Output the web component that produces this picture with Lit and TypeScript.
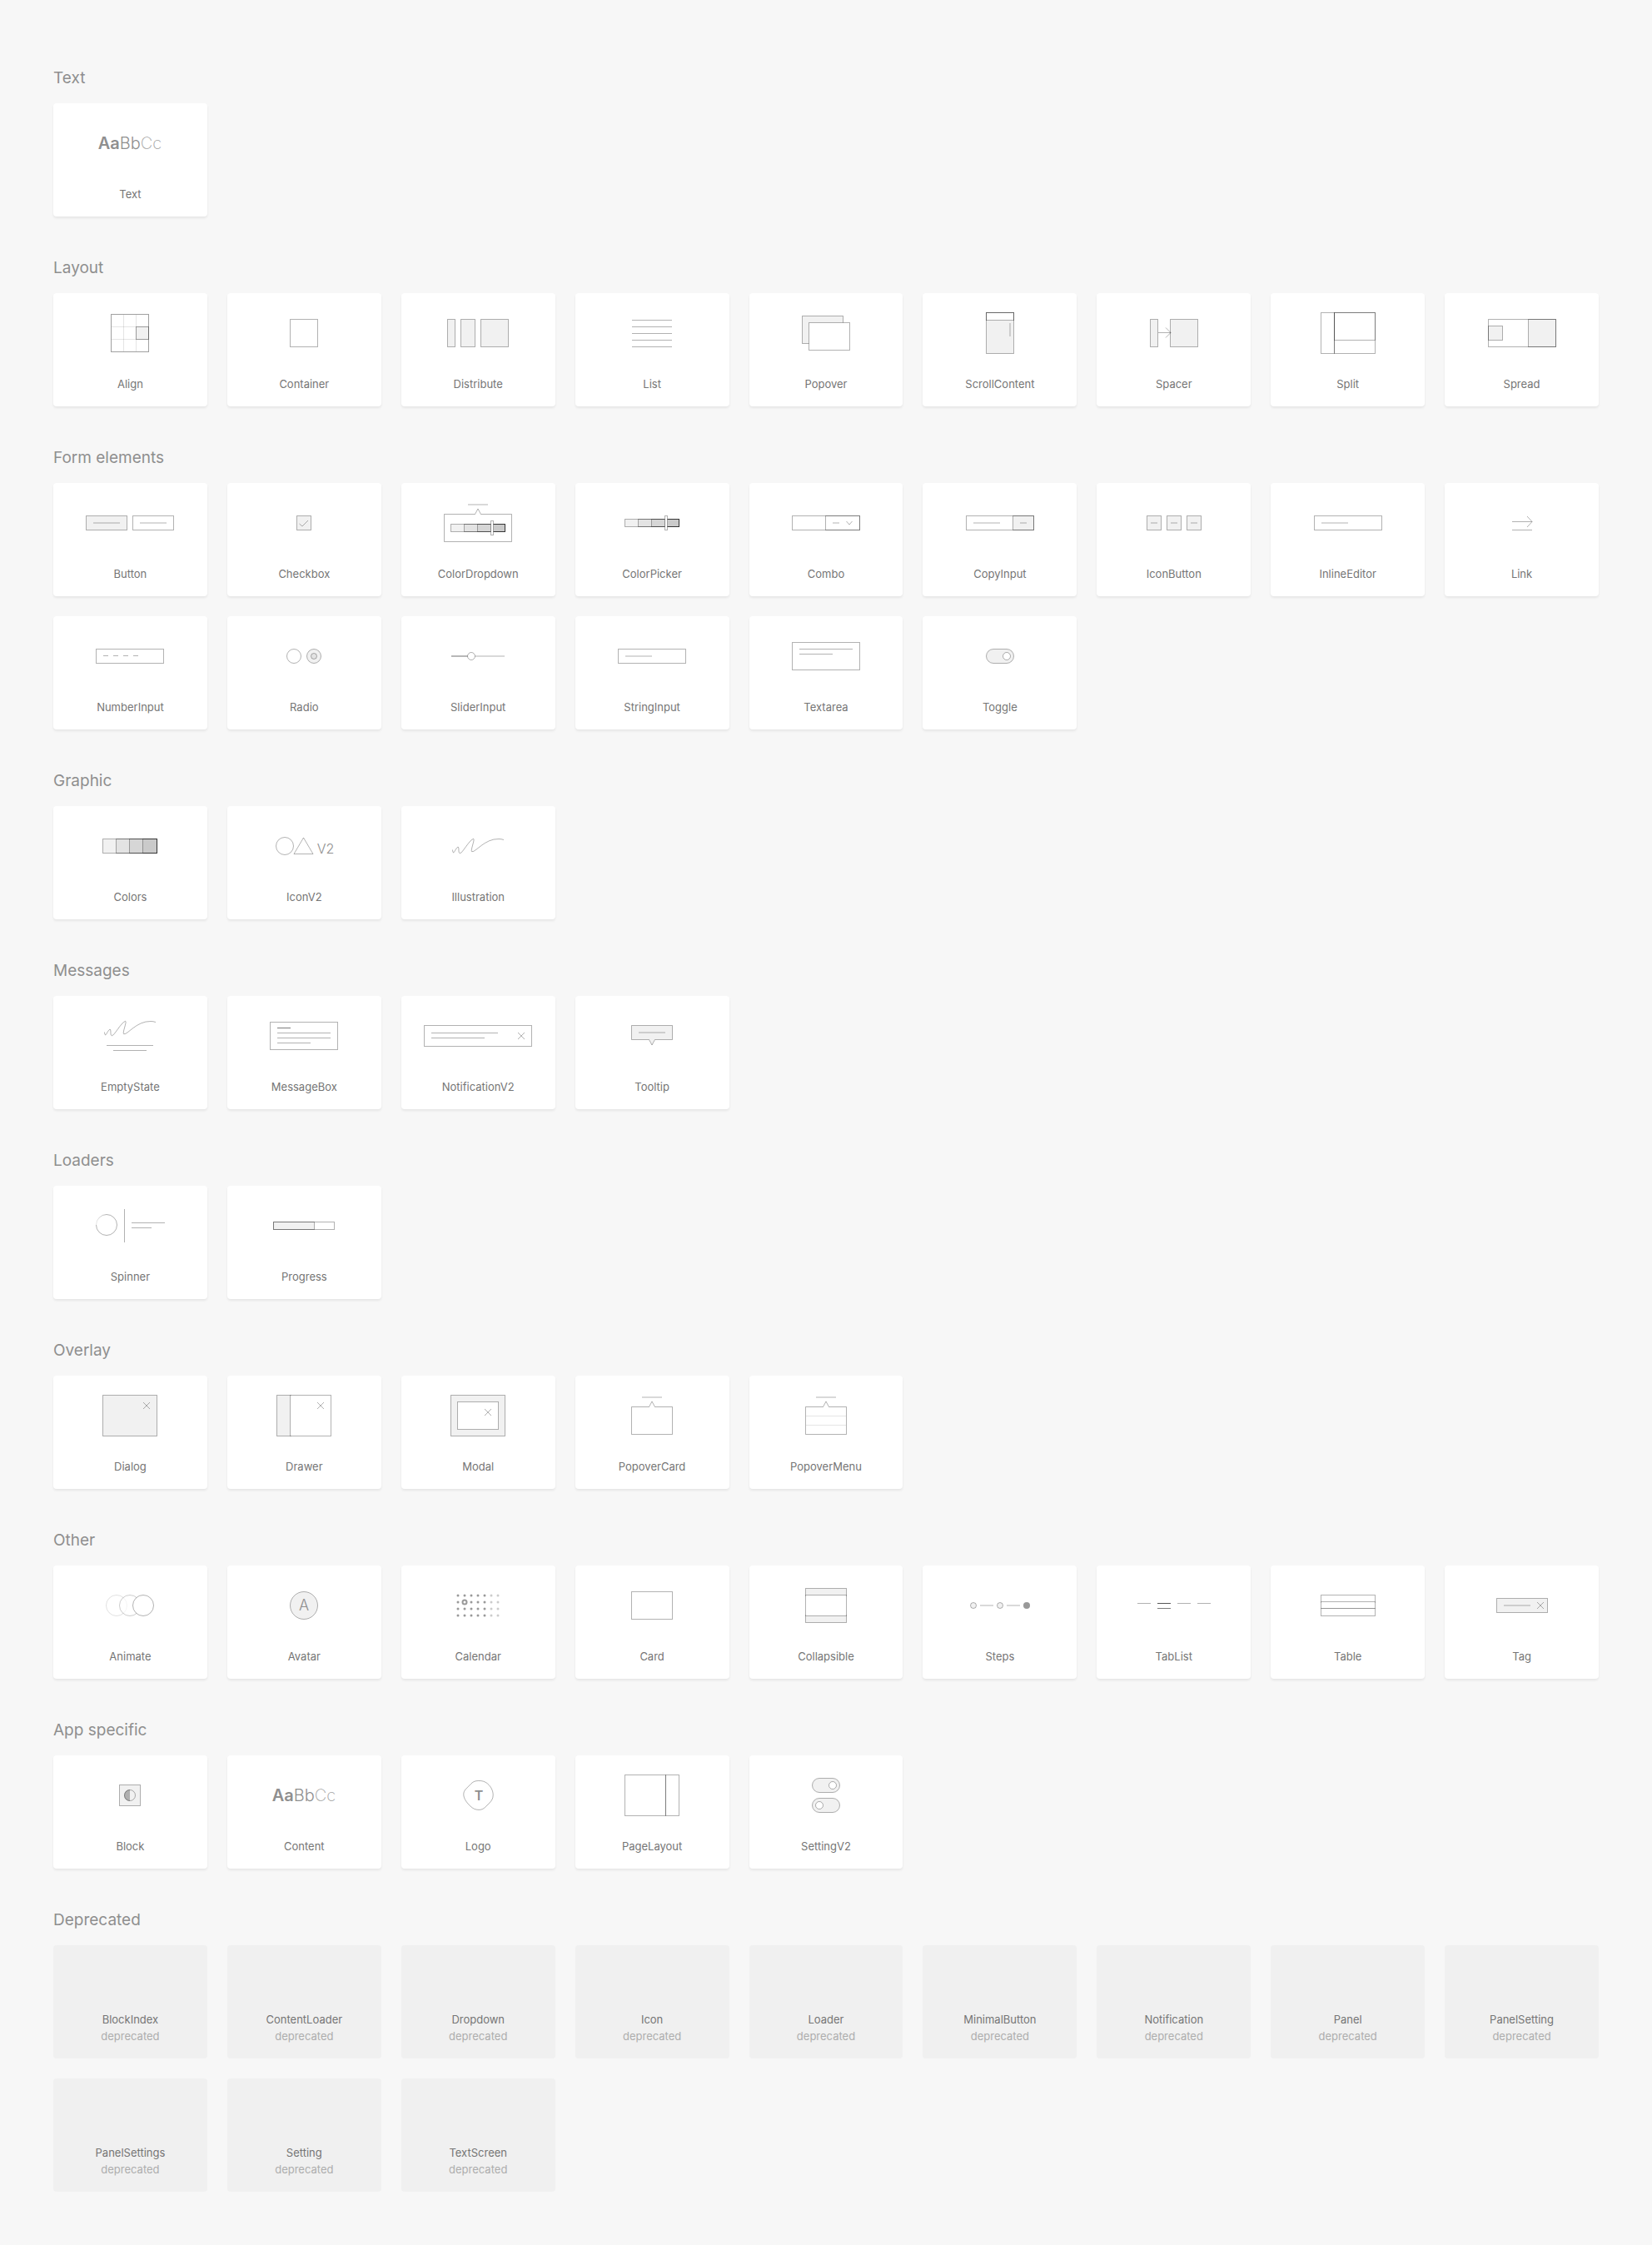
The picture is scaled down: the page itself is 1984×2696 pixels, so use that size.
import { LitElement, html, svg, css, nothing, SVGTemplateResult } from "lit";
import { customElement, property } from "lit/decorators.js";

type Art = SVGTemplateResult | SVGTemplateResult[];

/* Drawing helpers. Every icon is drawn around 0,0 on a 160 by 64 canvas. */

/** Outlined box, given by its outer edges. */
const box = (x1: number, y1: number, x2: number, y2: number, kind = "", r = 0) => svg`
  <rect class="line ${kind}" x=${x1 + 0.5} y=${y1 + 0.5} width=${x2 - x1 - 1} height=${y2 - y1 - 1} rx=${r}></rect>`;

/** Thin horizontal rule on the pixel row that starts at y. */
const rule = (x1: number, x2: number, y: number, kind = "") => svg`
  <rect class="rule ${kind}" x=${x1} y=${y} width=${x2 - x1} height="1"></rect>`;

/** Soft bar, two pixels thick, centred on y. */
const bar = (x1: number, x2: number, y = 0) => svg`
  <rect class="bar" x=${x1} y=${y - 1} width=${x2 - x1} height="2"></rect>`;

const ring = (cx: number, cy: number, r: number, kind = "") => svg`
  <circle class="line ${kind}" cx=${cx} cy=${cy} r=${r}></circle>`;

const stroke = (d: string, kind = "") => svg`<path class="line ${kind}" d=${d}></path>`;

const cross = (cx: number, cy: number) =>
  stroke(`M${cx - 4} ${cy - 4} L${cx + 4} ${cy + 4} M${cx + 4} ${cy - 4} L${cx - 4} ${cy + 4}`);

const swatches = (y1: number, y2: number) => [-33, -17, -1, 15].map((x) => box(x, y1, 33, y2, "tint"));

const toggle = (cy: number, knob: number) => svg`
  ${box(-17, cy - 9, 17, cy + 9, "tint", 8.5)}${ring(knob, cy, 4.5, "paper")}`;

const bubble = (half: number) =>
  stroke(`M${-half} -10.5 H-3.5 L0 -17 L3.5 -10.5 H${half} V22.5 H${-half} Z`);

const scribble = (dy: number) => svg`
  <g transform="translate(0 ${dy})">${stroke(
    "M-30.5 4.5 C-30.3 7 -29.6 8.8 -28.8 7.5 C-27 5 -25 .5 -23.6 1.3 C-22.4 2.5 -24 8.5 -21.5 8.7 " +
      "C-18.5 8.5 -11 -6.5 -5.5 -8.7 C-3 -8.5 -9.5 5.5 -7.3 6.7 C-3 8 8 -9 25 -8.5 C27 -8.5 29 -8.2 31 -7.5",
  )}</g>`;

const typeSample = svg`
  <text class="sample" x="0" y="7"><tspan class="heavy">Aa</tspan><tspan class="light">Bb</tspan><tspan class="thin">Cc</tspan></text>`;

const calendarDots = [-12, -4, 4, 12].flatMap((y) =>
  [-24, -16, -8, 0, 8, 16, 24].map((x) =>
    x === -16 && y === -4
      ? svg`<circle class="today" cx=${x} cy=${y} r="2.5"></circle>`
      : svg`<circle class=${x > 8 ? "dot faint" : "dot"} cx=${x} cy=${y} r="1.5"></circle>`,
  ),
);

const art: Record<string, Art> = {
  Text: typeSample,

  Align: [
    svg`<path class="hair" d="M-22.5 -22.5 H22.5 V22.5 H-22.5 Z M-7.5 -22 V22 M7.5 -22 V22 M-22 -7.5 H22 M-22 7.5 H22"></path>`,
    box(-23, -23, 23, 23),
    box(7, -8, 23, 8, "tint"),
  ],
  Container: box(-17, -17, 17, 17),
  Distribute: [box(-37, -17, -27, 17, "tint"), box(-21, -17, -3, 17, "tint"), box(3, -17, 37, 17, "tint")],
  List: [-16, -8, 0, 8, 16].map((y) => rule(-24, 24, y)),
  Popover: [box(-29, -21, 21, 13, "tint"), box(-21, -13, 29, 21, "paper")],
  ScrollContent: [
    box(-17, -25, 17, 25, "tint"),
    box(-17, -25, 17, -15, "paper"),
    svg`<rect class="bar" x="11" y="-12" width="2" height="16"></rect>`,
    stroke("M-16.5 -25 V-15 M16.5 -25 V-15 M-16 -24.5 H16"),
  ],
  Spacer: [
    box(-29, -17, -19, 17, "tint"),
    box(-5, -17, 29, 17, "tint"),
    rule(-19, -4, -1),
    stroke("M-10 -6.5 L-4 -.5 L-10 5.5"),
  ],
  Split: [box(-33, -25, -16, 25), box(-17, -25, 33, 25), box(-17, -25, 33, 9)],
  Spread: [box(-41, -17, 41, 17), box(-41, -9, -23, 9, "tint"), box(7, -17, 41, 17, "tint")],

  Button: [box(-53, -9, -3, 9, "tint"), bar(-44, -12), box(3, -9, 53, 9), bar(12, 44)],
  Checkbox: [box(-9, -9, 9, 9, "tint"), stroke("M-5.5 1 L-2 4 L5 -3")],
  ColorDropdown: [bar(-12, 12, -22), bubble(40.5), ...swatches(1, 11), box(15, -3, 19, 15, "paper")],
  ColorPicker: [...swatches(-5, 5), box(15, -9, 19, 9, "paper")],
  Combo: [box(-41, -9, 41, 9), box(-1, -9, 41, 9), bar(8, 16), stroke("M24.5 -2 L28 2 L31.5 -2")],
  CopyInput: [box(-41, -9, 41, 9), box(15, -9, 41, 9, "tint"), bar(-32, 0), bar(24, 32)],
  IconButton: [-24, 0, 24].map((x) => svg`${box(x - 9, -9, x + 9, 9, "tint")}${bar(x - 4, x + 4)}`),
  InlineEditor: [box(-41, -9, 41, 9), bar(-32, 0)],
  Link: [rule(-12, 12, -2), stroke("M6 -8 L12 -1.5 L6 5"), rule(-12, 12, 8)],
  NumberInput: [box(-41, -9, 41, 9), ...[-32, -20, -8, 4].map((x) => rule(x, x + 6, -1))],
  Radio: [ring(-12, 0, 8.5), ring(12, 0, 8.5, "tint"), ring(12, 0, 3.5, "tint")],
  SliderInput: [bar(-32, 32), bar(-32, -8), ring(-8, 0, 4.5, "paper")],
  StringInput: [box(-41, -9, 41, 9), bar(-32, 0)],
  Textarea: [box(-41, -17, 41, 17), rule(-32, 32, -9), rule(-32, 8, -3)],
  Toggle: toggle(0, 8),

  Colors: swatches(-9, 9),
  IconV2: [
    ring(-23, 0, 10.5),
    stroke("M-.5 -10 L11 9.5 H-12 Z"),
    svg`<text class="glyph" x="26" y="9">V2</text>`,
  ],
  Illustration: scribble(0),

  EmptyState: [scribble(-9), rule(-28, 28, 11), rule(-20, 20, 17)],
  MessageBox: [
    box(-41, -17, 41, 17),
    rule(-32, -16, -10, "strong"),
    rule(-32, 32, -4),
    rule(-32, 32, 2),
    rule(-32, 8, 8),
  ],
  NotificationV2: [box(-65, -13, 65, 13), rule(-56, 24, -4), rule(-56, 8, 2), cross(52, 0)],
  Tooltip: [stroke("M-24.5 -12.5 H24.5 V4.5 H3.5 L0 11 L-3.5 4.5 H-24.5 Z", "tint"), bar(-16, 16, -4)],

  Spinner: [
    svg`<defs><linearGradient id="fade" x1="0" y1="0" x2="1" y2="0">
      <stop offset="0" stop-color="#000" stop-opacity=".1"></stop>
      <stop offset="1" stop-color="#000" stop-opacity=".3"></stop>
    </linearGradient></defs>`,
    stroke("M-28 -13.5 A12.5 12.5 0 1 1 -40.5 -1"),
    svg`<path class="trail" d="M-40.5 -1 A12.5 12.5 0 0 1 -28 -13.5"></path>`,
    stroke("M-6.5 -20 V20"),
    rule(2, 42, -4),
    rule(2, 26, 2),
  ],
  Progress: [box(-37, -5, 37, 5), box(-37, -5, 13, 5, "tint")],

  Dialog: [box(-33, -25, 33, 25, "tint"), cross(20, -12)],
  Drawer: [box(-33, -25, -15, 25, "tint"), box(-17, -25, 33, 25, "paper"), cross(20, -12)],
  Modal: [box(-33, -25, 33, 25, "tint"), box(-25, -17, 25, 17, "paper"), cross(12, -4)],
  PopoverCard: [bar(-12, 12, -22), bubble(24.5)],
  PopoverMenu: [bar(-12, 12, -22), bubble(24.5), svg`<path class="hair" d="M-24 .5 H24 M-24 11.5 H24"></path>`],

  Animate: [
    svg`<g opacity=".4">${ring(-16, 0, 12.5)}</g>`,
    svg`<g opacity=".65">${ring(0, 0, 12.5, "paper")}</g>`,
    ring(16, 0, 12.5, "paper"),
  ],
  Avatar: [ring(0, 0, 16.5, "tint"), svg`<text class="glyph initial" x="0" y="6">A</text>`],
  Calendar: calendarDots,
  Card: box(-25, -17, 25, 17),
  Collapsible: [
    box(-25, -21, 25, -11, "tint"),
    box(-25, 11, 25, 21, "tint"),
    box(-25, -13, 25, 13, "paper"),
  ],
  Steps: [
    ring(-32, 0, 3.5, "tint"),
    bar(-24, -8),
    ring(0, 0, 3.5, "tint"),
    bar(8, 24),
    svg`<circle class="dot" cx="32" cy="0" r="4"></circle>`,
  ],
  TabList: [
    rule(-44, -28, -3),
    rule(-20, -4, -3, "strongest"),
    rule(4, 20, -3),
    rule(28, 44, -3),
    rule(-20, -4, 3, "strong"),
  ],
  Table: [box(-33, -13, 33, -3), box(-33, 3, 33, 13), box(-33, -5, 33, 4, "paper")],
  Tag: [box(-31, -9, 31, 9, "tint"), bar(-22, 10), cross(22, 0)],

  Block: [
    box(-13, -13, 13, 13, "tint"),
    svg`<path class="half" d="M0 -7 A7 7 0 0 0 0 7 Z"></path>`,
    ring(0, 0, 6.5),
  ],
  Content: typeSample,
  Logo: [
    stroke(
      "M.5 -17.5 C5 -17.7 8.6 -16.6 11.6 -14 C15.8 -10.3 18.2 -5.4 18.2 -.4 C18.2 3.6 16.6 6.4 13.8 9.2 " +
        "L9.2 13.8 C6.6 16.4 4.4 17.4 1 17.4 C-3 17.4 -6 15.9 -8.9 13.2 C-13.8 8.6 -17 3.8 -17.2 -.8 " +
        "C-17.3 -3.6 -16.4 -5.6 -14.4 -7.7 L-8 -14.2 C-5.4 -16.7 -3 -17.4 .5 -17.5 Z",
    ),
    svg`<text class="glyph heavy" x="1" y="6">T</text>`,
  ],
  PageLayout: [box(-33, -25, 17, 25), box(16, -25, 33, 25)],
  SettingV2: [toggle(-12, 8), toggle(12, -8)],
};

const groups: { title: string; names: string[]; deprecated?: boolean }[] = [
  { title: "Text", names: ["Text"] },
  {
    title: "Layout",
    names: ["Align", "Container", "Distribute", "List", "Popover", "ScrollContent", "Spacer", "Split", "Spread"],
  },
  {
    title: "Form elements",
    names: [
      "Button", "Checkbox", "ColorDropdown", "ColorPicker", "Combo", "CopyInput", "IconButton", "InlineEditor",
      "Link", "NumberInput", "Radio", "SliderInput", "StringInput", "Textarea", "Toggle",
    ],
  },
  { title: "Graphic", names: ["Colors", "IconV2", "Illustration"] },
  { title: "Messages", names: ["EmptyState", "MessageBox", "NotificationV2", "Tooltip"] },
  { title: "Loaders", names: ["Spinner", "Progress"] },
  { title: "Overlay", names: ["Dialog", "Drawer", "Modal", "PopoverCard", "PopoverMenu"] },
  {
    title: "Other",
    names: ["Animate", "Avatar", "Calendar", "Card", "Collapsible", "Steps", "TabList", "Table", "Tag"],
  },
  { title: "App specific", names: ["Block", "Content", "Logo", "PageLayout", "SettingV2"] },
  {
    title: "Deprecated",
    deprecated: true,
    names: [
      "BlockIndex", "ContentLoader", "Dropdown", "Icon", "Loader", "MinimalButton", "Notification", "Panel",
      "PanelSetting", "PanelSettings", "Setting", "TextScreen",
    ],
  },
];

@customElement("component-card")
export class ComponentCard extends LitElement {
  static styles = css`
    :host {
      display: block;
    }
    .card {
      box-sizing: border-box;
      min-height: 136px;
      padding: 16px 0 17px;
      display: flex;
      flex-direction: column;
      align-items: center;
      justify-content: space-between;
      border-radius: 4px;
      background: #fff;
      box-shadow: 0 2px 3px rgba(0, 0, 0, 0.07);
      color: #757575;
      font-size: 13px;
      line-height: 20px;
      text-align: center;
      text-decoration: none;
    }
    .card.deprecated {
      justify-content: flex-end;
      background: #f0f0f0;
      box-shadow: none;
    }
    .note {
      color: #adadad;
    }
    .icon {
      display: block;
      width: 160px;
      height: 64px;
    }
    .line {
      fill: none;
      stroke: rgba(0, 0, 0, 0.3);
    }
    .tint {
      fill: rgba(0, 0, 0, 0.055);
    }
    .paper {
      fill: #fff;
    }
    .rule {
      fill: rgba(0, 0, 0, 0.3);
    }
    .strong {
      fill: rgba(0, 0, 0, 0.51);
    }
    .strongest {
      fill: rgba(0, 0, 0, 0.66);
    }
    .bar {
      fill: rgba(0, 0, 0, 0.15);
    }
    .hair {
      fill: none;
      stroke: rgba(0, 0, 0, 0.1);
    }
    .trail {
      fill: none;
      stroke: url(#fade);
    }
    .half {
      fill: rgba(0, 0, 0, 0.27);
    }
    .dot {
      fill: #999;
    }
    .faint {
      fill: #ccc;
    }
    .today {
      fill: none;
      stroke: #999;
      stroke-width: 2;
    }
    .sample,
    .glyph {
      fill: #8f8f8f;
      text-anchor: middle;
      font-size: 16px;
      font-weight: 300;
    }
    .sample {
      font-size: 20px;
    }
    .initial {
      font-size: 18px;
    }
    .heavy {
      font-weight: 600;
    }
    .light {
      font-weight: 300;
    }
    .thin {
      font-weight: 200;
      fill: #a6a6a6;
    }
  `;

  @property() name = "";
  @property({ type: Boolean }) deprecated = false;

  render() {
    const drawing = art[this.name];
    return html`
      <a class="card ${this.deprecated ? "deprecated" : ""}" href="#${this.name}">
        ${drawing && !this.deprecated
          ? html`<svg class="icon" viewBox="-80 -32 160 64" aria-hidden="true">${drawing}</svg>`
          : nothing}
        <span class="name">${this.name}</span>
        ${this.deprecated ? html`<span class="note">deprecated</span>` : nothing}
      </a>
    `;
  }
}

@customElement("app-root")
export class AppRoot extends LitElement {
  static styles = css`
    :host {
      display: block;
      min-height: 100vh;
      box-sizing: border-box;
      background: #f7f7f7;
      font-family: Inter, "Liberation Sans", sans-serif;
    }
    .page {
      padding: 82px 64px 64px;
      display: flex;
      flex-direction: column;
      gap: 50px;
    }
    .title {
      margin: 0 0 18px;
      color: #8f8f8f;
      font-size: 19px;
      font-weight: 400;
      line-height: 24px;
    }
    .cards {
      display: grid;
      grid-template-columns: repeat(auto-fill, minmax(184px, 1fr));
      gap: 24px;
    }
  `;

  render() {
    return html`
      <main class="page">
        ${groups.map(
          (group) => html`
            <section class="group">
              <h2 class="title">${group.title}</h2>
              <div class="cards">
                ${group.names.map(
                  (name) => html`<component-card .name=${name} .deprecated=${!!group.deprecated}></component-card>`,
                )}
              </div>
            </section>
          `,
        )}
      </main>
    `;
  }
}
